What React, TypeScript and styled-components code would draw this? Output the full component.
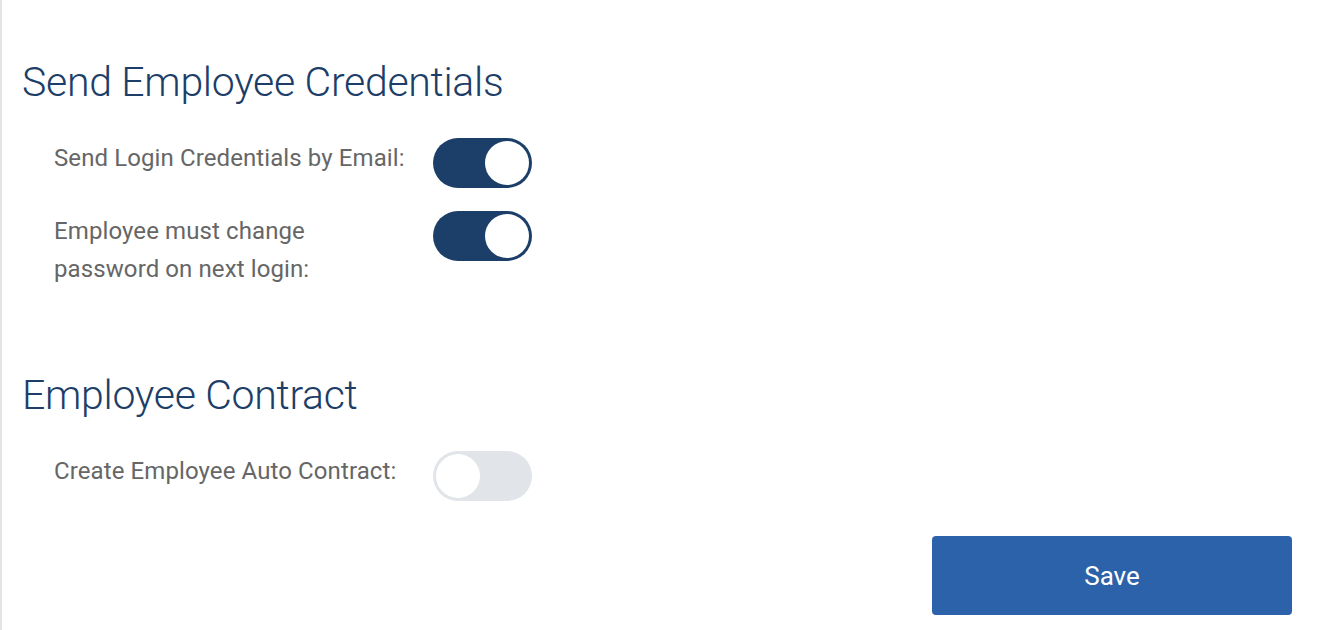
import styled, { createGlobalStyle } from 'styled-components';
import { useState } from 'react';

const GlobalStyle = createGlobalStyle`
  html, body {
    margin: 0;
    padding: 0;
    background: #fff;
  }
  body {
    font-family: Roboto, "Noto Sans", sans-serif;
  }
`;

const Page = styled.div`
  min-height: 630px;
  box-sizing: border-box;
  border-left: 2px solid #e4e4e4;
  padding: 58px 48px 15px 20px;
  display: flex;
  flex-direction: column;
`;

const Section = styled.section<{ $gap?: number }>`
  display: flex;
  flex-direction: column;
  margin-bottom: ${(p) => p.$gap ?? 0}px;
`;

const Heading = styled.h2`
  margin: 0 0 33px;
  font-size: 41px;
  line-height: 48px;
  font-weight: 300;
  color: #1c3e68;
  letter-spacing: -0.3px;
`;

const Rows = styled.div`
  display: flex;
  flex-direction: column;
  gap: 24px;
  padding-left: 32px;
`;

const Row = styled.div`
  display: flex;
  align-items: flex-start;
`;

const Label = styled.div`
  width: 379px;
  font-size: 24px;
  line-height: 38px;
  letter-spacing: 0.1px;
  color: #666;
`;

const Track = styled.button<{ $on: boolean }>`
  position: relative;
  flex: none;
  width: 99px;
  height: 50px;
  padding: 0;
  border: none;
  border-radius: 25px;
  cursor: pointer;
  background: ${(p) => (p.$on ? '#1c3f69' : '#e1e4e8')};
  margin-top: -1px;
`;

const Knob = styled.span<{ $on: boolean }>`
  position: absolute;
  top: 3px;
  left: ${(p) => (p.$on ? '52px' : '3px')};
  width: 44px;
  height: 44px;
  border-radius: 50%;
  background: #fff;
`;

const Footer = styled.div`
  display: flex;
  justify-content: flex-end;
`;

const SaveButton = styled.button`
  width: 360px;
  height: 79px;
  border: none;
  border-radius: 4px;
  background: #2c62a9;
  color: #fff;
  font-family: Roboto, "Noto Sans", sans-serif;
  font-size: 26px;
  cursor: pointer;
`;

const Toggle = ({ on, onClick }: { on: boolean; onClick: () => void }) => (
  <Track $on={on} onClick={onClick} type="button" role="switch" aria-checked={on}>
    <Knob $on={on} />
  </Track>
);

const App = () => {
  const [sendEmail, setSendEmail] = useState(true);
  const [mustChange, setMustChange] = useState(true);
  const [autoContract, setAutoContract] = useState(false);

  return (
    <>
      <GlobalStyle />
      <Page>
        <Section $gap={83}>
          <Heading>Send Employee Credentials</Heading>
          <Rows>
            <Row>
              <Label>Send Login Credentials by Email:</Label>
              <Toggle on={sendEmail} onClick={() => setSendEmail(!sendEmail)} />
            </Row>
            <Row>
              <Label>
                Employee must change
                <br />
                password on next login:
              </Label>
              <Toggle on={mustChange} onClick={() => setMustChange(!mustChange)} />
            </Row>
          </Rows>
        </Section>
        <Section $gap={35}>
          <Heading>Employee Contract</Heading>
          <Rows>
            <Row>
              <Label>Create Employee Auto Contract:</Label>
              <Toggle on={autoContract} onClick={() => setAutoContract(!autoContract)} />
            </Row>
          </Rows>
        </Section>
        <Footer>
          <SaveButton type="button">Save</SaveButton>
        </Footer>
      </Page>
    </>
  );
};

export default App;
